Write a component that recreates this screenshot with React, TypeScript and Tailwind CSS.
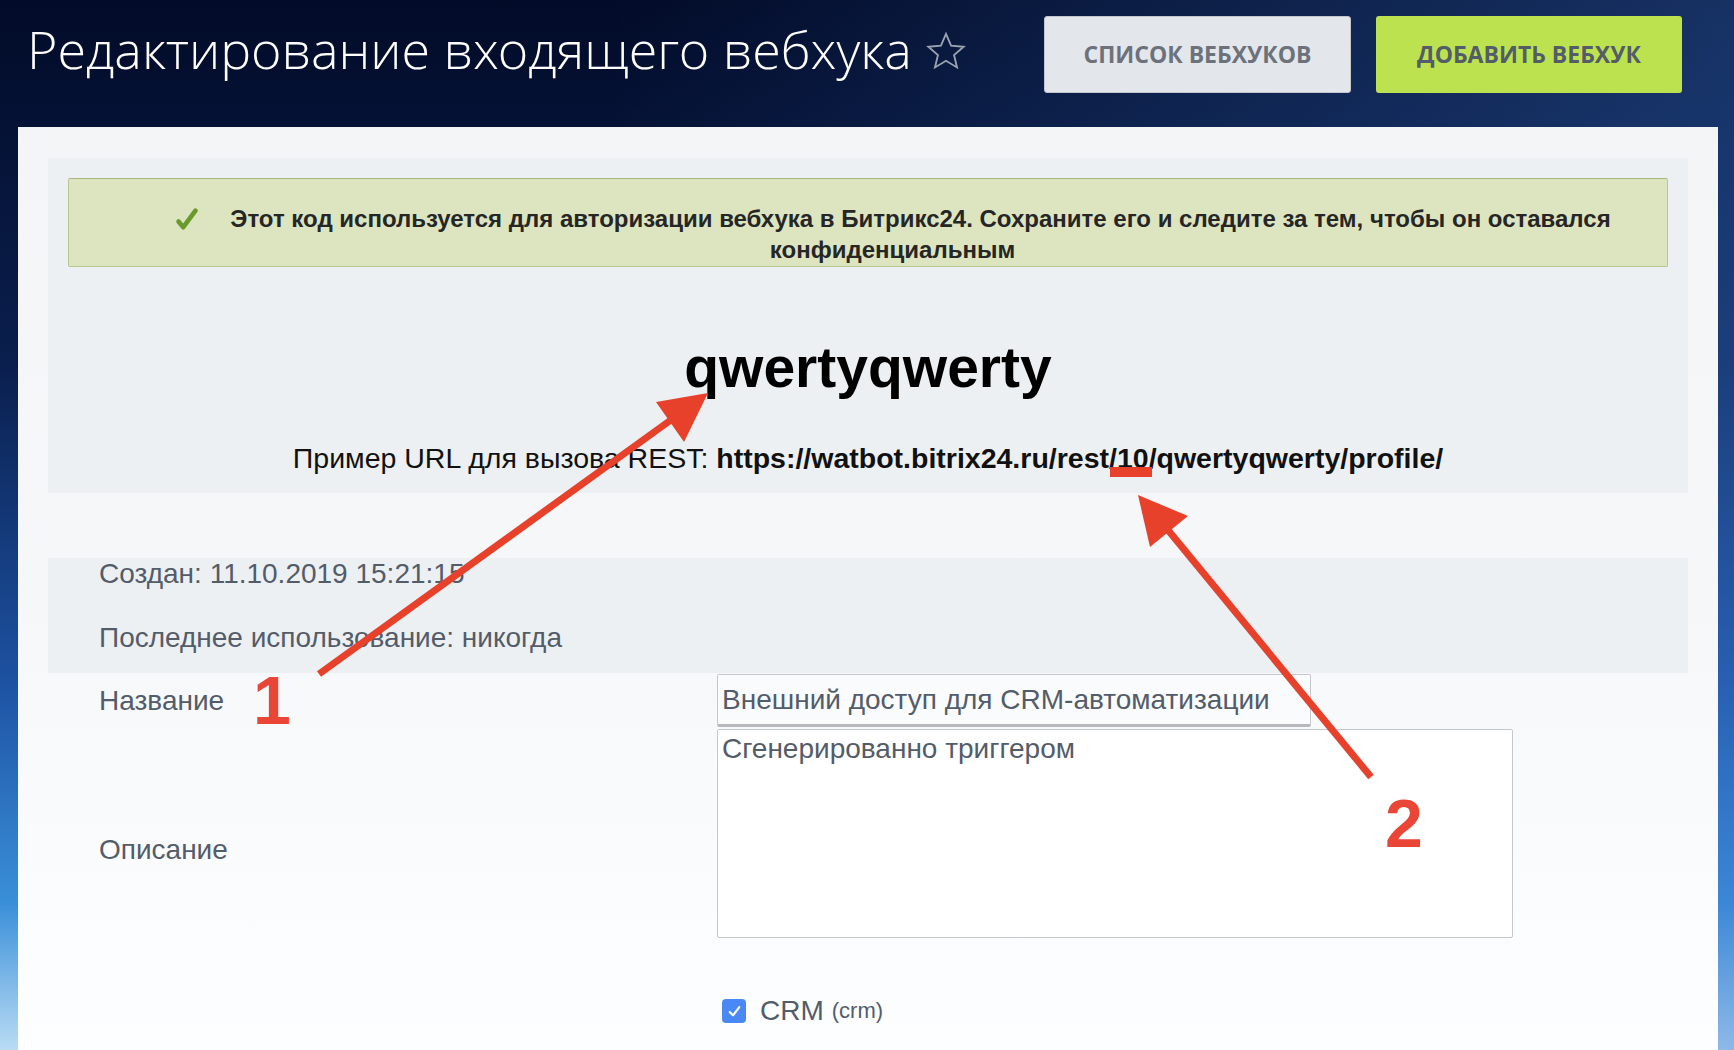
import React from "react";

const sans = "font-['Liberation_Sans',Arial,Helvetica,sans-serif]";
const open = "font-['Open_Sans',sans-serif]";

const StarIcon = () => (
  <svg width="42" height="42" viewBox="0 0 24 24" fill="none" stroke="#9aa3af" strokeWidth="1.05">
    <path d="M12 2.2l2.9 6.75 7.2.6-5.5 4.75 1.7 7.1L12 17.6l-6.3 3.8 1.7-7.1-5.5-4.75 7.2-.6z" />
  </svg>
);

const CheckMark = () => (
  <svg width="24" height="24" viewBox="0 0 24 24" fill="none">
    <path d="M3.5 14.5L8.3 20.2L20.5 3.6" stroke="#6a9a2d" strokeWidth="4.6" strokeLinecap="round" strokeLinejoin="round" />
  </svg>
);

const Checkbox = () => (
  <span className="flex h-[24px] w-[24px] items-center justify-center rounded-[4px] bg-[#4a89f3]">
    <svg width="15" height="15" viewBox="0 0 14 14" fill="none">
      <path d="M2.5 7.5L5.6 10.6L11.5 3" stroke="white" strokeWidth="2" strokeLinecap="round" strokeLinejoin="round" />
    </svg>
  </span>
);

// red arrows drawn over the screenshot
const Annotations = () => (
  <>
    <svg className="pointer-events-none absolute left-0 top-0" width="1734" height="1050">
      <line x1="319" y1="674" x2="675" y2="417" stroke="#e8412b" strokeWidth="7" />
      <polygon points="708,393 656,402 684,442" fill="#e8412b" />
      <line x1="1371" y1="777" x2="1163" y2="524" stroke="#e8412b" strokeWidth="7" />
      <polygon points="1138,495 1188,516 1150,547" fill="#e8412b" />
    </svg>
    <div className={`${sans} absolute left-[253px] top-[666px] text-[68px] font-bold leading-[68px] text-[#ea4637]`}>1</div>
    <div className={`${sans} absolute left-[1385px] top-[789px] text-[68px] font-bold leading-[68px] text-[#ea4637]`}>2</div>
  </>
);

export default function App() {
  return (
    <div className="relative flex min-h-screen w-full flex-col overflow-hidden bg-[linear-gradient(90deg,rgba(40,100,190,0)_35%,rgba(60,120,210,0.35)_100%),linear-gradient(180deg,#020b28_0%,#0a1f4e_35%,#1d52a2_65%,#3a8fd9_86%,#b9dcf4_100%)]">
      <header className="flex h-[127px] shrink-0 items-start justify-between pl-[27px] pr-[52px] pt-[16px]">
        <div className="mt-[3px] flex items-center gap-[13px]">
          <h1 className="font-['Open_Sans_Light','Open_Sans',sans-serif] text-[52px] font-light leading-[60px] text-white">
            Редактирование входящего вебхука
          </h1>
          <span className="mt-[4px]">
            <StarIcon />
          </span>
        </div>
        <div className="flex gap-[25px]">
          <button className={`${open} h-[77px] w-[307px] rounded-[3px] border border-[#c2c7ce] bg-[#e3e6ea] text-[23px] font-bold uppercase text-[#6c727b]`}>
            Список вебхуков
          </button>
          <button className={`${open} h-[77px] w-[306px] rounded-[3px] bg-[#bde24f] text-[23px] font-bold uppercase text-[#535c69]`}>
            Добавить вебхук
          </button>
        </div>
      </header>

      <main className={`${sans} ml-[18px] mr-[16px] flex-1 bg-[linear-gradient(180deg,#f3f5f7_0%,#f6f7f9_50%,#fdfeff_100%)] px-[30px] pt-[31px]`}>
        <section className="bg-[#edf0f3] px-[20px] pb-[19px] pt-[20px]">
          <div className="flex items-start rounded-[2px] border border-[#b9c891] border-t-[#a8b97b] bg-[#dce5c0] pb-[1px] pl-[106px] pr-[50px] pt-[24px]">
            <span className="mt-[4px] shrink-0">
              <CheckMark />
            </span>
            <p className="ml-[25px] flex-1 whitespace-nowrap text-center text-[24px] font-bold leading-[31px] text-[#262626]">
              Этот код используется для авторизации вебхука в Битрикс24. Сохраните его и следите за тем, чтобы он оставался
              <span className="block pr-[56px]">конфиденциальным</span>
            </p>
          </div>
          <div className="mt-[68px] text-center text-[57px] font-bold leading-[64px] text-black">qwertyqwerty</div>
          <div className="mt-[43px] text-center text-[28.5px] leading-[32px] text-[#111]">
            Пример URL для вызова REST:{" "}
            <b>
              https://watbot.bitrix24.ru/rest/
              <span className="relative">
                10
                <span className="absolute left-[-7px] top-[25px] h-[10px] w-[42px] bg-[#e8412b]" />
              </span>
              /qwertyqwerty/profile/
            </b>
          </div>
        </section>

        <section className="mt-[65px] flex flex-col gap-[34px] bg-[#edf0f3] pb-[20px] pl-[51px] pt-[1px] text-[28px] leading-[30px] text-[#535c69]">
          <div>Создан: 11.10.2019 15:21:15</div>
          <div>Последнее использование: никогда</div>
        </section>

        <div className="mt-[1px] flex flex-col text-[28px] leading-[30px] text-[#535c69]">
          <div className="flex items-center">
            <label className="w-[669px] shrink-0 pl-[51px]">Название</label>
            <input
              className="h-[53px] w-[594px] rounded-[2px] border border-[#c4c8cd] border-b-[3px] border-b-[#b5b9be] bg-[#fafbfc] px-[4px] leading-[30px] text-[#535c69] outline-none"
              defaultValue="Внешний доступ для CRM-автоматизации"
            />
          </div>
          <div className="mt-[2px] flex items-start">
            <label className="w-[669px] shrink-0 pl-[51px] pt-[106px]">Описание</label>
            <textarea
              className="h-[209px] w-[796px] resize-none rounded-[2px] border border-[#c4c8cd] bg-white px-[4px] pt-[4px] leading-[30px] text-[#535c69] outline-none"
              defaultValue="Сгенерированно триггером"
            />
          </div>
          <div className="mt-[58px] flex items-center">
            <div className="w-[674px] shrink-0" />
            <Checkbox />
            <span className="ml-[14px]">CRM</span>
            <span className="ml-[8px] text-[22px]">(crm)</span>
          </div>
        </div>
      </main>

      <Annotations />
    </div>
  );
}
